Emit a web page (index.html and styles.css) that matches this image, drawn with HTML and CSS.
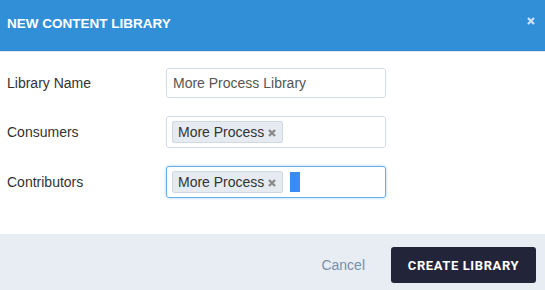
FILE: index.html
```html
<!DOCTYPE html>
<html>
<head>
<meta charset="utf-8">
<link rel="stylesheet" href="styles.css">
</head>
<body>
<div class="modal">
  <div class="modal-header">
    <div class="modal-title">NEW CONTENT LIBRARY</div>
    <button class="close" aria-label="Close">
      <svg width="8" height="8" viewBox="0 0 8 8"><path d="M1 1L7 7M7 1L1 7" stroke="currentColor" stroke-width="2.2" stroke-linecap="butt"/></svg>
    </button>
  </div>
  <div class="modal-body">
    <div class="row row-name">
      <label class="label">Library Name</label>
      <div class="input">More Process Library</div>
    </div>
    <div class="row">
      <label class="label">Consumers</label>
      <div class="input tags">
        <span class="tag">More Process<svg class="tag-x" width="8" height="8" viewBox="0 0 8 8"><path d="M1 1L7 7M7 1L1 7" stroke="currentColor" stroke-width="2.4"/></svg></span>
      </div>
    </div>
    <div class="row">
      <label class="label">Contributors</label>
      <div class="input tags focused">
        <span class="tag">More Process<svg class="tag-x" width="8" height="8" viewBox="0 0 8 8"><path d="M1 1L7 7M7 1L1 7" stroke="currentColor" stroke-width="2.4"/></svg></span>
        <span class="caret"></span>
      </div>
    </div>
  </div>
  <div class="modal-footer">
    <span class="cancel">Cancel</span>
    <button class="primary">CREATE LIBRARY</button>
  </div>
</div>
</body>
</html>
```

FILE: styles.css
```css
html, body {
  margin: 0;
  padding: 0;
  background: #ffffff;
}
body {
  font-family: "Liberation Sans", Arial, sans-serif;
  width: 545px;
  height: 290px;
  overflow: hidden;
}
.modal {
  display: flex;
  flex-direction: column;
  height: 290px;
}
.modal-header {
  height: 51px;
  background: #318fd7;
  border-bottom: 1px solid #e4e8ec;
  display: flex;
  align-items: center;
  justify-content: space-between;
  padding: 0 10px 0 7px;
  box-sizing: content-box;
}
.modal-title {
  color: #ffffff;
  font-weight: bold;
  font-size: 13.5px;
  margin-top: -4px;
}
.close {
  background: none;
  border: 0;
  padding: 0;
  color: #cde2f6;
  display: flex;
  margin-top: -9px;
}
.modal-body {
  padding: 16px 0 0 7px;
  display: flex;
  flex-direction: column;
  gap: 18px;
  box-sizing: content-box;
  height: 166px;
}
.row {
  display: flex;
  align-items: center;
}
.label {
  width: 159px;
  font-size: 14px;
  color: #333333;
}
.input {
  width: 220px;
  height: 32px;
  box-sizing: border-box;
  border: 1px solid #cfdce8;
  border-radius: 3px;
  display: flex;
  align-items: center;
  padding: 0 6px;
  font-size: 14px;
  color: #555555;
}
.row-name .input {
  height: 30px;
}
.input.focused {
  border-color: #66afe9;
  box-shadow: 0 0 3px rgba(102, 175, 233, 0.6);
}
.tags {
  padding: 0 5px;
  gap: 6px;
}
.tag {
  display: flex;
  align-items: center;
  height: 22px;
  box-sizing: border-box;
  background: #e6ebf1;
  border: 1px solid #cfd9e3;
  border-radius: 2px;
  padding: 0 6px 0 5px;
  color: #333333;
  font-size: 14px;
}
.tag-x {
  color: #8a8a8a;
  margin-left: 4px;
  margin-top: 2px;
}
.caret {
  width: 10px;
  height: 20px;
  background: #3a8bf5;
  margin-left: 1px;
}
.modal-footer {
  flex: 1;
  background: #e8edf4;
  display: flex;
  align-items: flex-start;
  justify-content: flex-end;
  padding: 13px 9px 0 0;
}
.cancel {
  font-size: 14px;
  color: #7a8fa8;
  margin-top: 10px;
  margin-right: 26px;
}
.primary {
  width: 145px;
  height: 36px;
  background: #22253a;
  color: #ffffff;
  border: 0;
  border-radius: 3px;
  font-family: Roboto, "Liberation Sans", sans-serif;
  font-weight: bold;
  font-size: 13px;
  letter-spacing: 0.6px;
  padding: 0;
}
```
